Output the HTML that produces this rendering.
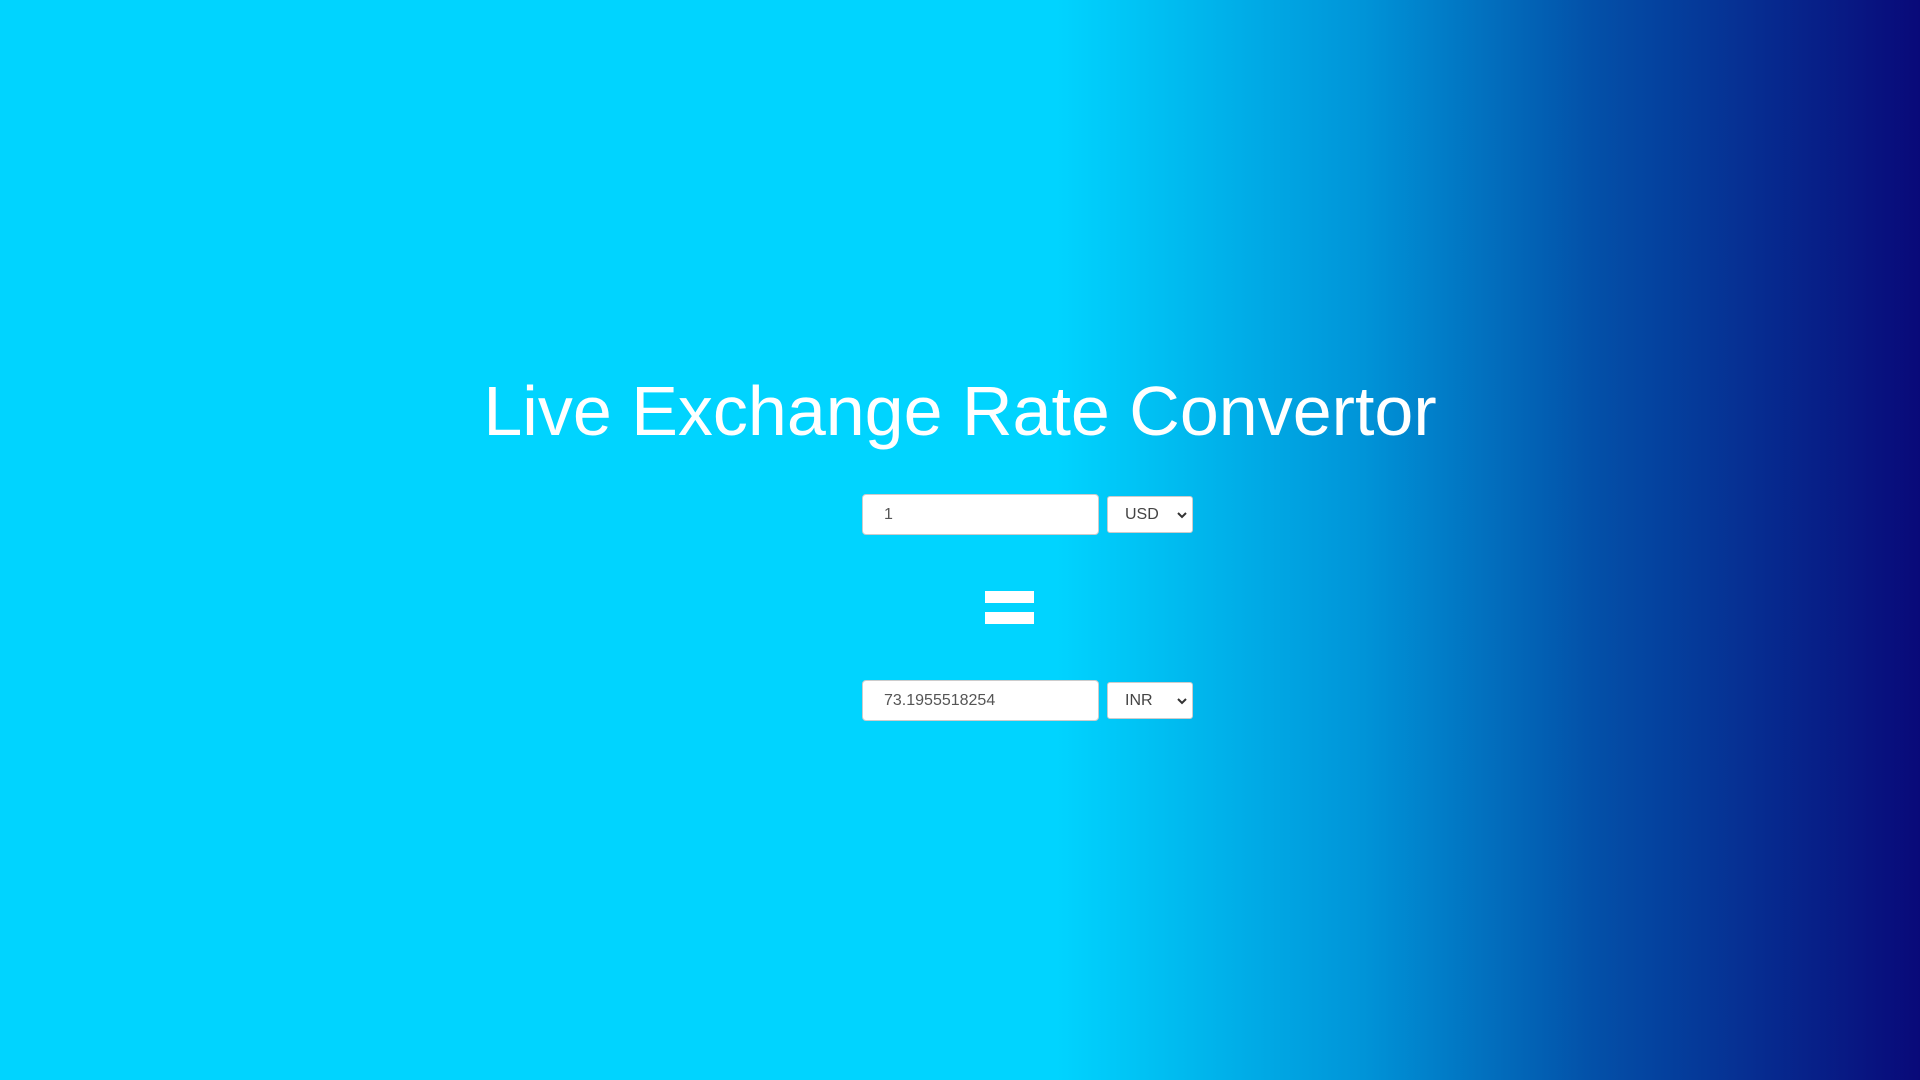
<!DOCTYPE html>
<html><head><meta charset="utf-8"><style>
html,body{margin:0;width:1920px;height:1080px;overflow:hidden}
body{background:linear-gradient(90deg,#00d4ff 0%,#00d4ff 55%,#0094d8 71%,#0350a8 83%,#090979 100%);font-family:"Liberation Sans",Arial,sans-serif;position:relative}
h1{position:absolute;top:369px;left:0;width:1920px;text-align:center;margin:0;font-weight:normal;color:#fff;font-size:70px;line-height:84px}
.in{position:absolute;left:862px;width:237px;height:41px;background:#fff;border:1px solid #ccc;border-radius:4px;box-sizing:border-box;color:#555;font-size:16px;line-height:39px;padding-left:21px}
.sel{position:absolute;left:1107px;width:86px;height:37px;background:#fff;border:1px solid #ccc;border-radius:3px;box-sizing:border-box;color:#444;font-size:16px;line-height:35px;padding-left:17px}
.sel svg{position:absolute;right:5px;top:14px}
.bar{position:absolute;left:985px;width:49px;height:12px;background:#fff}
</style></head><body>
<h1>Live Exchange Rate Convertor</h1>
<div class="in" style="top:494px">1</div>
<div class="sel" style="top:496px">USD<svg width="10" height="8" viewBox="0 0 10 8"><path d="M1 2l4 4 4-4" stroke="#333" stroke-width="2" fill="none"/></svg></div>
<div class="bar" style="top:591px"></div>
<div class="bar" style="top:612px"></div>
<div class="in" style="top:680px">73.1955518254</div>
<div class="sel" style="top:682px">INR<svg width="10" height="8" viewBox="0 0 10 8"><path d="M1 2l4 4 4-4" stroke="#333" stroke-width="2" fill="none"/></svg></div>
</body></html>
